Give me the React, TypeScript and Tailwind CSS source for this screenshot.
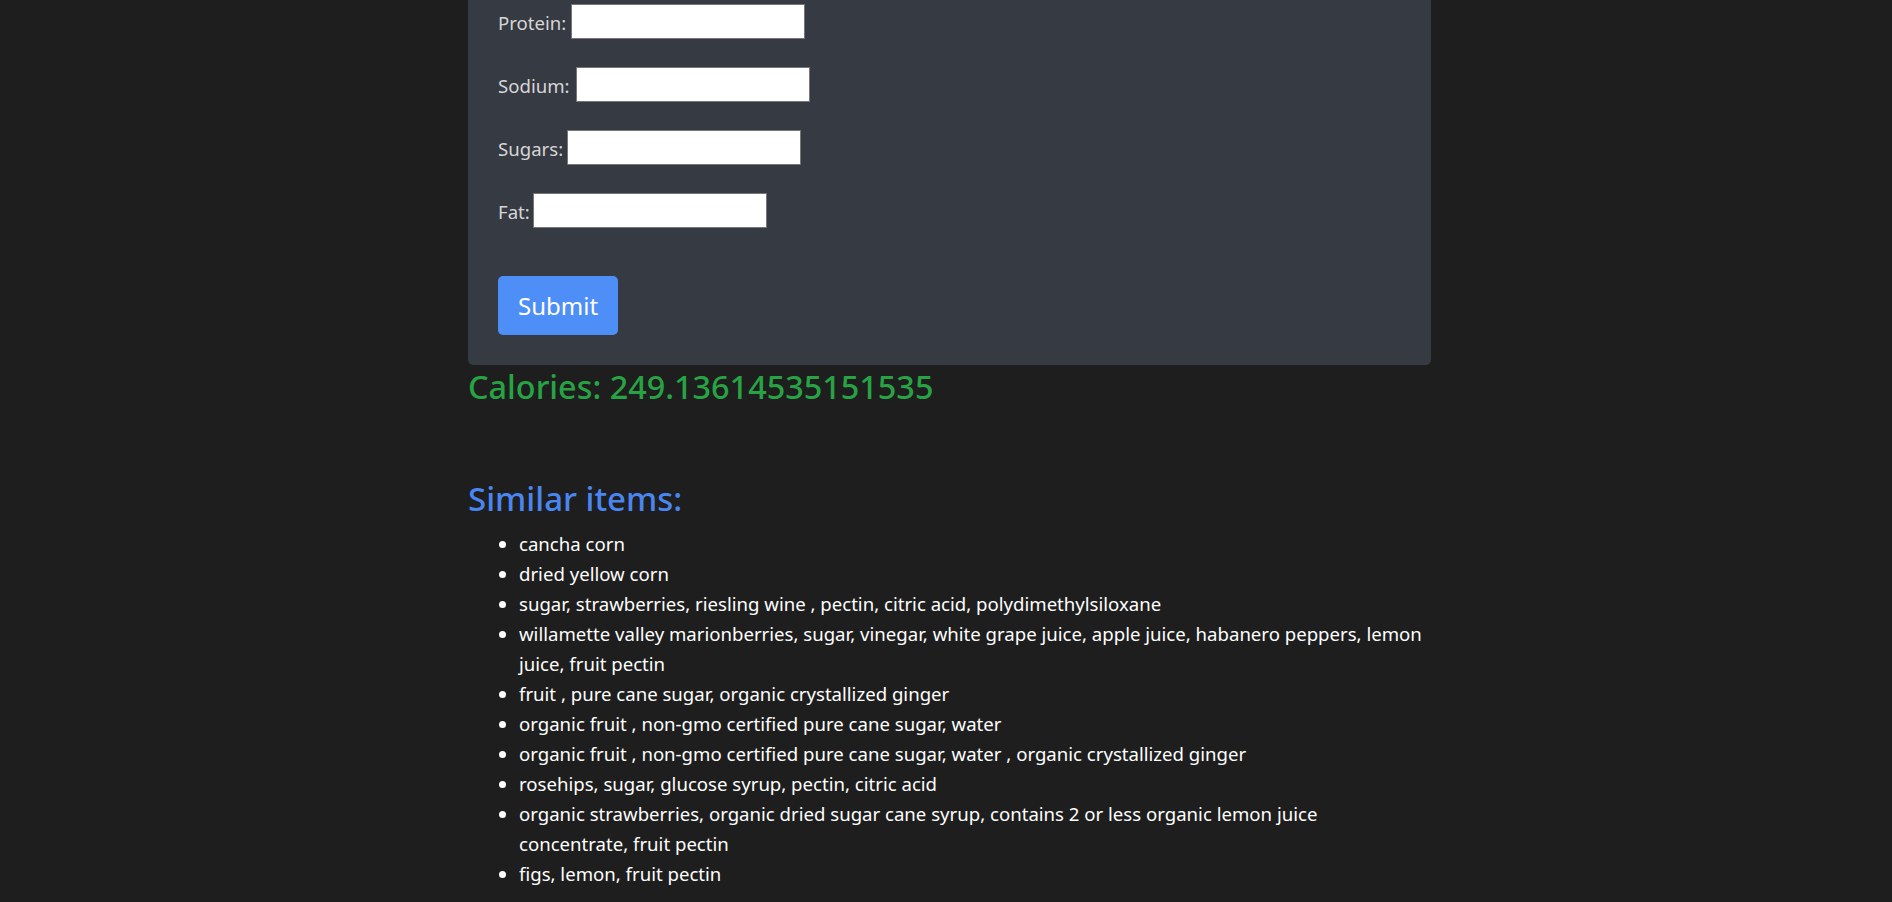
const FIELDS = [
  { label: 'Protein:', labelW: 'w-[73px]' },
  { label: 'Sodium:', labelW: 'w-[78px]' },
  { label: 'Sugars:', labelW: 'w-[69px]' },
  { label: 'Fat:', labelW: 'w-[35px]' },
];

// items that wrap in the reference are split into their two lines
const SIMILAR: (string | [string, string])[] = [
  'cancha corn',
  'dried yellow corn',
  'sugar, strawberries, riesling wine , pectin, citric acid, polydimethylsiloxane',
  [
    'willamette valley marionberries, sugar, vinegar, white grape juice, apple juice, habanero peppers, lemon',
    'juice, fruit pectin',
  ],
  'fruit , pure cane sugar, organic crystallized ginger',
  'organic fruit , non-gmo certified pure cane sugar, water',
  'organic fruit , non-gmo certified pure cane sugar, water , organic crystallized ginger',
  'rosehips, sugar, glucose syrup, pectin, citric acid',
  [
    'organic strawberries, organic dried sugar cane syrup, contains 2 or less organic lemon juice',
    'concentrate, fruit pectin',
  ],
  'figs, lemon, fruit pectin',
];

export default function App() {
  return (
    <div
      className="min-h-screen bg-[#1e1e1e] text-white"
      style={{ fontFamily: '"Noto Sans", "Open Sans", sans-serif' }}
    >
      <div className="ml-[468px] w-[963px]">
        <form className="rounded-b-[5px] bg-[#363a43] px-[30px] pt-[4px] pb-[30px]">
          <div className="flex flex-col gap-[28px]">
            {FIELDS.map((f) => (
              <div key={f.label} className="flex h-[35px] items-center">
                <label
                  className={`${f.labelW} whitespace-nowrap pt-[3px] text-[18.6px] leading-[30px] text-[#d6d6d6]`}
                >
                  {f.label}
                </label>
                <input
                  type="text"
                  className="h-[35px] w-[234px] border border-[#767676] bg-white px-1 text-black outline-none"
                />
              </div>
            ))}
          </div>

          <button
            type="submit"
            className="mt-[48px] h-[59px] rounded-[5px] bg-[#4e8ef7] px-[20px] text-[24px] leading-[36px] text-white"
          >
            Submit
          </button>
        </form>

        <h3 className="text-[32.4px] font-medium leading-[42px] text-[#27a344]">
          Calories: 249.13614535151535
        </h3>

        <h3 className="mt-[71px] mb-[9px] text-[33px] font-medium leading-[42px] text-[#4a86f1]">
          Similar items:
        </h3>

        <ul className="list-disc pl-[51px] text-[18.6px] leading-[30px] text-white">
          {SIMILAR.map((item, i) => (
            <li key={i}>
              {typeof item === 'string' ? (
                item
              ) : (
                <>
                  <span className="whitespace-nowrap">{item[0]}</span>
                  <br />
                  {item[1]}
                </>
              )}
            </li>
          ))}
        </ul>
      </div>
    </div>
  );
}
